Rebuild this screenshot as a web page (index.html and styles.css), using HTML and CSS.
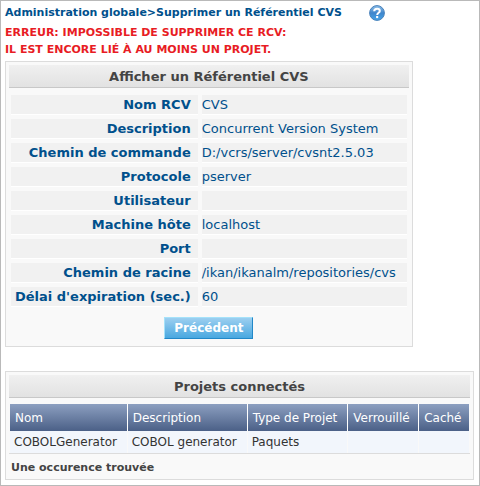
FILE: index.html
```html
<!DOCTYPE html>
<html lang="fr">
<head>
<meta charset="utf-8">
<title>Supprimer un Référentiel CVS</title>
<link rel="stylesheet" href="styles.css">
</head>
<body>
<main class="page">
  <header class="topbar">
    <h1 class="crumbs">Administration globale&gt;Supprimer un Référentiel CVS</h1>
    <a class="help" href="#aide" aria-label="Aide">
      <svg width="16" height="16" viewBox="0 0 16 16" aria-hidden="true">
        <defs>
          <linearGradient id="ball" x1="0" y1="0" x2="0" y2="1">
            <stop offset="0" stop-color="#8fc0ea"/>
            <stop offset="0.5" stop-color="#3f86cc"/>
            <stop offset="1" stop-color="#45a5ea"/>
          </linearGradient>
        </defs>
        <circle cx="8" cy="8" r="7.4" fill="url(#ball)" stroke="#4a82ba" stroke-width="1"/>
        <path d="M5.2 6.2C5.2 4.5 6.4 3.7 8.1 3.7s2.7.9 2.7 2.2c0 1.9-2.6 1.9-2.6 4" fill="none" stroke="#fff" stroke-width="2"/>
        <rect x="7.1" y="11" width="2.1" height="2.1" fill="#fff"/>
      </svg>
    </a>
  </header>
  <p class="error" role="alert">ERREUR: IMPOSSIBLE DE SUPPRIMER CE RCV:<br>IL EST ENCORE LIÉ À AU MOINS UN PROJET.</p>

  <section class="panel panel-details">
    <h2 class="panel-title">Afficher un Référentiel CVS</h2>
    <table class="details">
      <tbody>
        <tr><th scope="row">Nom RCV</th><td>CVS</td></tr>
        <tr><th scope="row">Description</th><td>Concurrent Version System</td></tr>
        <tr><th scope="row">Chemin de commande</th><td>D:/vcrs/server/cvsnt2.5.03</td></tr>
        <tr><th scope="row">Protocole</th><td>pserver</td></tr>
        <tr><th scope="row">Utilisateur</th><td></td></tr>
        <tr><th scope="row">Machine hôte</th><td>localhost</td></tr>
        <tr><th scope="row">Port</th><td></td></tr>
        <tr><th scope="row">Chemin de racine</th><td>/ikan/ikanalm/repositories/cvs</td></tr>
        <tr><th scope="row">Délai d'expiration (sec.)</th><td>60</td></tr>
      </tbody>
    </table>
    <div class="actions"><button class="button" type="button">Précédent</button></div>
  </section>

  <section class="panel">
    <h2 class="panel-title">Projets connectés</h2>
    <div class="list">
      <table class="projects">
        <thead>
          <tr><th scope="col">Nom</th><th scope="col">Description</th><th scope="col">Type de Projet</th><th scope="col">Verrouillé</th><th scope="col">Caché</th></tr>
        </thead>
        <tbody>
          <tr><td>COBOLGenerator</td><td>COBOL generator</td><td>Paquets</td><td></td><td></td></tr>
        </tbody>
      </table>
    </div>
    <p class="count">Une occurence trouvée</p>
  </section>
</main>
</body>
</html>
```
FILE: styles.css
```css
* {
  box-sizing: border-box;
}

body {
  margin: 0;
  background: #fff;
  color: #00508c;
  font-family: Verdana, "DejaVu Sans", sans-serif;
  font-size: 13px;
  line-height: 16px;
}

h1,
h2,
p {
  margin: 0;
}

.page {
  min-height: 100vh;
  padding: 3px 5px 5px 4px;
  border: 1px solid #b9b9b9;
}

.topbar {
  display: flex;
  align-items: center;
  gap: 27px;
  height: 18px;
}

.crumbs {
  font-size: 11px;
  font-weight: bold;
  white-space: nowrap;
}

.help {
  display: flex;
}

.error {
  margin-bottom: 3px;
  padding-top: 2px;
  color: #e81c24;
  font-size: 11px;
  font-weight: bold;
  line-height: 17px;
}

.panel {
  padding: 3px;
  border: 1px solid #dcdcdc;
  background: #f9f9f9;
}

.panel-details {
  width: fit-content;
  margin-bottom: 24px;
}

.panel-title {
  padding-top: 2px;
  border-bottom: 1px solid #c8c8c8;
  background: linear-gradient(#f0f0f0, #e2e2e2);
  color: #444;
  font-size: 13px;
  line-height: 20px;
  text-align: center;
}

.details {
  margin: 3px -2px 0;
  border-spacing: 4px;
  border-collapse: separate;
}

.details th,
.details td {
  height: 20px;
  padding: 1px 11px 0 0;
  border-bottom: 1px solid #fff;
  background: #f1f1f1;
  line-height: 18px;
  text-align: left;
}

.details th {
  padding-right: 7px;
  padding-left: 4px;
  text-align: right;
}

.actions {
  padding: 6px 0 4px;
  text-align: center;
}

.button {
  height: 22px;
  padding: 0 9px;
  border: 1px solid;
  border-color: #a5e2fa #2288c8 #2288c8 #a5e2fa;
  background: linear-gradient(#9ccff0, #49a8e0);
  color: #fff;
  font: bold 12px/20px Verdana, "DejaVu Sans", sans-serif;
}

.list {
  margin-top: 6px;
  border-bottom: 1px solid #dcdcdc;
}

.projects {
  width: 100%;
  padding: 0 1px;
  border-spacing: 0;
  border-collapse: separate;
  color: #333;
}

.projects th,
.projects td {
  height: 22px;
  padding: 0 4px;
  border-right: 1px solid #f9f9f9;
  background: #f2f6fc;
  font-size: 12px;
  text-align: left;
  white-space: nowrap;
}

.projects th {
  height: 27px;
  padding: 0 5px;
  border-right-color: #fff;
  background: linear-gradient(#8c9fc0, #4b6087);
  color: #fff;
  font-weight: normal;
}

.projects th:last-child,
.projects td:last-child {
  border-right: 0;
}

.count {
  padding: 6px 2px 0;
  color: #444;
  font-size: 11px;
  font-weight: bold;
}
```
